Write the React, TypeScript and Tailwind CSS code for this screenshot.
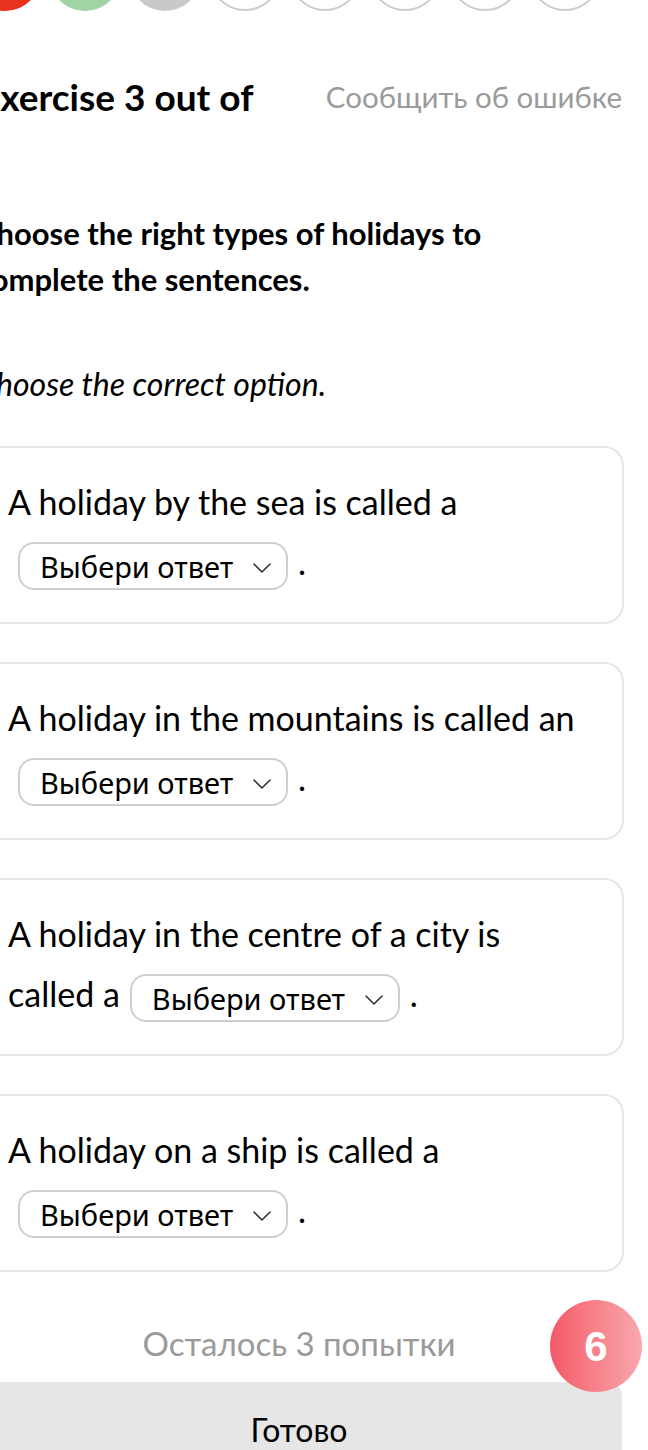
import { ChevronDown } from "lucide-react";

const SENTENCES = [
  "A holiday by the sea is called a",
  "A holiday in the mountains is called an",
  "A holiday in the centre of a city is called a",
  "A holiday on a ship is called a",
];

const DOTS = ["red", "green", "gray", "empty", "empty", "empty", "empty", "empty"];

function Select() {
  return (
    <span className="inline-flex items-center align-middle h-[48px] w-[270px] rounded-[16px] border-2 border-[#cfcfcf] bg-white pl-[20px] pr-[8px] mx-[10px] text-[29px] leading-none text-black font-['Noto_Sans',sans-serif]">
      <span className="flex-1">Выбери ответ</span>
      <ChevronDown size={32} strokeWidth={1.2} className="text-[#333] mt-[4px]" />
    </span>
  );
}

export default function App() {
  return (
    <div className="w-[648px] h-[1450px] overflow-hidden bg-white font-['Lato',sans-serif] text-black">
      <div className="ml-[-24px] w-[646px]">
        {/* progress dots */}
        <div className="flex gap-[8px] ml-[-7px] mt-[-61px]">
          {DOTS.map((d, i) => (
            <div
              key={i}
              className={
                d === "red"
                  ? "w-[72px] h-[72px] shrink-0 rounded-full bg-[#e8321e]"
                  : d === "green"
                  ? "w-[72px] h-[72px] shrink-0 rounded-full bg-[#9fd4a5]"
                  : d === "gray"
                  ? "w-[72px] h-[72px] shrink-0 rounded-full bg-[#c9c9c9]"
                  : "w-[72px] h-[72px] shrink-0 rounded-full border-2 border-[#cdcdcd]"
              }
            />
          ))}
        </div>

        {/* header */}
        <div className="flex items-center justify-between mt-[64px] h-[44px]">
          <span className="text-[37px] font-bold ml-[3px]">Exercise 3 out of</span>
          <span className="text-[29.5px] text-[#9a9a9a]">Сообщить об ошибке</span>
        </div>

        <h2 className="mt-[91px] text-[31px] font-bold leading-[46px] pr-[100px]">
          Choose the right types of holidays to complete the sentences.
        </h2>

        <p className="mt-[62px] text-[32px] italic leading-[40px]">Choose the correct option.</p>

        {/* sentences */}
        <div className="mt-[42px] mr-[-2px] flex flex-col gap-[38px]">
          {SENTENCES.map((s, i) => (
            <div
              key={i}
              className="h-[178px] rounded-[20px] border-2 border-[#e6e6e6] pl-[30px] pr-[30px] pt-[24px] text-[34px] leading-[60px]"
            >
              {s}
              <Select />
              <span>.</span>
            </div>
          ))}
        </div>

        {/* footer */}
        <div className="relative mt-[48px]">
          <p className="text-center text-[33px] text-[#9a9a9a] h-[46px] leading-[46px]">Осталось 3 попытки</p>
          <div className="mt-[16px] h-[100px] rounded-tr-[14px] bg-[#e6e6e6] pt-[24px] text-center text-[32px]">
            Готово
          </div>
          <div className="absolute right-[-20px] top-[-20px] w-[92px] h-[92px] rounded-full bg-gradient-to-r from-[#f25867] to-[#f9a7ae] flex items-center justify-center text-white text-[42px] font-bold font-['Liberation_Sans',sans-serif]">
            6
          </div>
        </div>
      </div>
    </div>
  );
}
